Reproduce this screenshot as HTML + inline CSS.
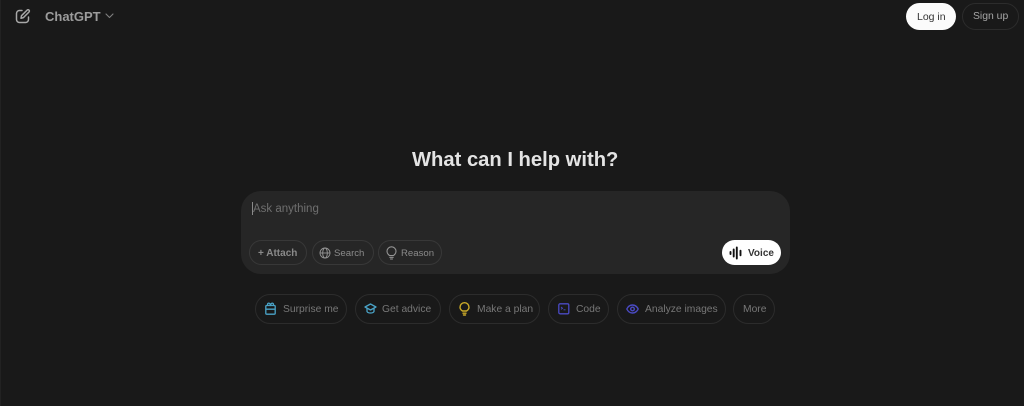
<!DOCTYPE html>
<html><head><meta charset="utf-8"><style>
*{box-sizing:border-box}
html,body{margin:0;padding:0;width:1024px;height:406px;overflow:hidden;background:#191919;font-family:"Liberation Sans",sans-serif}
.a{position:absolute;white-space:nowrap}
.p{position:absolute;border:1px solid #2c2c2c;border-radius:16px}
.t{position:absolute;white-space:nowrap;font-size:10.3px;line-height:14px;color:#777}
svg{position:absolute;fill:none}
</style></head><body>
<div class="a" style="left:0;top:0;width:1px;height:406px;background:#222"></div>
<svg style="left:15px;top:8px" width="16" height="16" viewBox="0 0 16 16" stroke="#a8a8a8" stroke-width="1.5" stroke-linecap="round" stroke-linejoin="round"><path d="M7 2.500H4.500a3 3 0 0 0-3 3v6a3 3 0 0 0 3 3h6a3 3 0 0 0 3-3V9"/><path d="M6 10.300l.5-2.600 5.600-5.600a1.300 1.300 0 0 1 1.900 1.900L8.400 9.600z"/></svg>
<div class="a" style="left:45px;top:9px;font-size:13px;line-height:16px;font-weight:bold;color:#9c9c9c">ChatGPT</div>
<svg style="left:105px;top:13px" width="9" height="6" viewBox="0 0 9 6" stroke="#808080" stroke-width="1.1" stroke-linecap="round" stroke-linejoin="round"><path d="M1 1l3.500 3.500L8 1"/></svg>

<div class="a" style="left:906px;top:3px;width:50px;height:27px;border-radius:14px;background:#fbfbfb"></div>
<div class="t" style="left:917px;top:10px;color:#333;font-size:10.5px">Log in</div>
<div class="p" style="left:962px;top:3px;width:57px;height:27px;border-radius:14px"></div>
<div class="t" style="left:973px;top:10px;color:#a6a6a6;font-size:10.4px">Sign up</div>

<div class="a" style="left:412px;top:146px;font-size:20.2px;line-height:28px;font-weight:bold;color:#e4e4e4">What can I help with?</div>

<div class="a" style="left:241px;top:191px;width:549px;height:83px;border-radius:20px;background:#262626"></div>
<div class="a" style="left:252px;top:202px;width:1px;height:13px;background:#8a8a8a"></div>
<div class="t" style="left:253px;top:202px;font-size:11.5px;line-height:15px;color:#6f6f6f">Ask anything</div>

<div class="p" style="left:249px;top:240px;width:58px;height:25px;border-color:#383838"></div>
<div class="t" style="left:258px;top:247px;font-size:10px;font-weight:bold;line-height:13px;color:#8a8a8a">+ Attach</div>
<div class="p" style="left:312px;top:240px;width:62px;height:25px;border-color:#383838"></div>
<svg style="left:319px;top:247px" width="12" height="12" viewBox="0 0 12 12" stroke="#969696" stroke-width=".9"><circle cx="6" cy="6" r="5"/><ellipse cx="6" cy="6" rx="2.300" ry="5"/><path d="M1 6h10"/></svg>
<div class="t" style="left:334px;top:247px;font-size:9.6px;line-height:13px;color:#8a8a8a">Search</div>
<div class="p" style="left:378px;top:240px;width:64px;height:25px;border-color:#383838"></div>
<svg style="left:386px;top:246px" width="11" height="14" viewBox="0 0 11 14" stroke="#969696" stroke-width="1.100" stroke-linecap="round"><path d="M3.500 9.500C2 8.500 1 7.200 1 5.300a4.500 4.500 0 0 1 9 0c0 1.900-1 3.200-2.500 4.200z"/><path d="M3.800 11.300h3.400M4.500 13h2"/></svg>
<div class="t" style="left:401px;top:247px;font-size:9.6px;line-height:13px;color:#8a8a8a">Reason</div>

<div class="a" style="left:722px;top:240px;width:59px;height:25px;border-radius:13px;background:#fff"></div>
<svg style="left:729px;top:246px" width="14" height="14" viewBox="0 0 14 14" stroke="#111" stroke-width="1.900" stroke-linecap="round"><path d="M1.500 6v2M4.700 3.500v7M7.800 1.500v11M11.500 4.700v4.600"/></svg>
<div class="t" style="left:748px;top:247px;font-size:10px;font-weight:bold;line-height:13px;color:#333">Voice</div>

<div class="p" style="left:255px;top:294px;width:92px;height:30px"></div>
<svg style="left:265px;top:302px" width="11" height="13" viewBox="0 0 11 13" stroke="#4aa3c7" stroke-width="1.300" stroke-linejoin="round"><rect x=".8" y="3.500" width="9.400" height="8.700" rx="1"/><path d="M.8 7.200h9.400M3 3.500a1.300 1.300 0 1 1 2-1.500l.5 1.500.5-1.500a1.300 1.300 0 1 1 2 1.500"/></svg>
<div class="t" style="left:283px;top:302.500px">Surprise me</div>

<div class="p" style="left:355px;top:294px;width:86px;height:30px"></div>
<svg style="left:364px;top:303px" width="13" height="12" viewBox="0 0 13 12" stroke="#4aa3c7" stroke-width="1.300" stroke-linejoin="round"><path d="M6.500 1L12 4 6.500 7 1 4z"/><path d="M3 5.500v3c1 2 6 2 7 0v-3"/></svg>
<div class="t" style="left:382px;top:302.500px">Get advice</div>

<div class="p" style="left:449px;top:294px;width:91px;height:30px"></div>
<svg style="left:459px;top:302px" width="11" height="14" viewBox="0 0 11 14" stroke="#c9a928" stroke-width="1.400" stroke-linecap="round"><path d="M3.500 9C2 8 1 7 1 5.200a4.500 4.500 0 0 1 9 0C10 7 9 8 7.500 9z"/><path d="M4 11.200h3M4.500 13h2"/></svg>
<div class="t" style="left:477px;top:302.500px">Make a plan</div>

<div class="p" style="left:548px;top:294px;width:61px;height:30px"></div>
<svg style="left:558px;top:303px" width="12" height="12" viewBox="0 0 12 12" stroke="#4a4ac4" stroke-width="1.300"><rect x=".8" y=".8" width="10" height="10" rx="1.300"/><path d="M3 4l1.500 1.200L3 6.400M5.500 6.800h2" stroke-width=".9"/></svg>
<div class="t" style="left:576px;top:302.500px">Code</div>

<div class="p" style="left:617px;top:294px;width:109px;height:30px"></div>
<svg style="left:626px;top:303px" width="13" height="12" viewBox="0 0 13 12" stroke="#4a4ac4" stroke-width="1.400"><path d="M.8 6C2 3.500 4 2 6.500 2S11 3.500 12.200 6C11 8.500 9 10 6.500 10S2 8.500.8 6z"/><circle cx="6.500" cy="6" r="1.800"/></svg>
<div class="t" style="left:645px;top:302.500px">Analyze images</div>

<div class="p" style="left:733px;top:294px;width:42px;height:30px"></div>
<div class="t" style="left:743px;top:302.500px">More</div>
</body></html>
